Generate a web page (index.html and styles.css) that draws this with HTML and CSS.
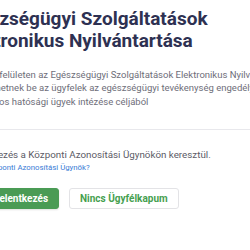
FILE: index.html
```html
<!DOCTYPE html>
<html lang="hu">
<head>
<meta charset="utf-8">
<link rel="stylesheet" href="styles.css">
</head>
<body>
<main class="card">
  <h1 class="title">Egészségügyi Szolgáltatások<br>Elektronikus Nyilvántartása</h1>
  <p class="lead">Az alábbi felületen az Egészségügyi Szolgáltatások Elektronikus Nyilvántartásába<br>jelentkezhetnek be az ügyfelek az egészségügyi tevékenység engedélyezésével<br>kapcsolatos hatósági ügyek intézése céljából</p>
  <hr class="divider">
  <p class="info">Bejelentkezés a Központi Azonosítási Ügynökön keresztül.</p>
  <a class="help" href="#">Mi az a Központi Azonosítási Ügynök?</a>
  <div class="actions">
    <button class="btn btn-primary" type="button"><svg class="btn-icon" viewBox="0 0 16 16" width="12" height="12" aria-hidden="true"><path d="M6 3H3v10h3M10 5l3 3-3 3M13 8H6" fill="none" stroke="currentColor" stroke-width="1.6"/></svg>Bejelentkezés</button>
    <button class="btn btn-outline" type="button">Nincs Ügyfélkapum</button>
  </div>
</main>
</body>
</html>
```
FILE: styles.css
```css
html, body {
  margin: 0;
  padding: 0;
  background: #ffffff;
  overflow: hidden;
}
body {
  font-family: Roboto, "Noto Sans", sans-serif;
  width: 250px;
  height: 250px;
}
.card {
  margin-left: -42px;
  width: 600px;
  padding-top: 8px;
  display: flex;
  flex-direction: column;
  align-items: flex-start;
}
.title {
  margin: 0;
  font-size: 19px;
  line-height: 22px;
  font-weight: 700;
  color: #2e3152;
  white-space: nowrap;
}
.lead {
  margin: 15.5px 0 0;
  font-size: 9.5px;
  line-height: 13.5px;
  color: #6e6e79;
  white-space: nowrap;
}
.divider {
  align-self: stretch;
  margin: 21px 0 0;
  border: 0;
  border-top: 1px solid #e8e8ec;
}
.info {
  margin: 18px 0 0;
  font-size: 9.8px;
  line-height: 14px;
  color: #5b5b66;
  white-space: nowrap;
}
.help {
  margin-top: 0;
  font-size: 7.8px;
  line-height: 11px;
  color: #3a7bd5;
  text-decoration: none;
  white-space: nowrap;
}
.actions {
  display: flex;
  gap: 10px;
  margin-top: 15px;
}
.btn {
  display: flex;
  align-items: center;
  gap: 4px;
  font-family: Roboto, "Noto Sans", sans-serif;
  font-size: 10px;
  font-weight: 700;
  height: 21px;
  padding: 0 10px;
  border-radius: 3px;
  cursor: pointer;
}
.btn-primary {
  background: #4a9b55;
  border: 1px solid #4a9b55;
  color: #ffffff;
  box-shadow: 0 1px 2px rgba(0, 0, 0, 0.12);
}
.btn-outline {
  background: #ffffff;
  border: 1px solid #e3e3e6;
  color: #46a04f;
}
```
